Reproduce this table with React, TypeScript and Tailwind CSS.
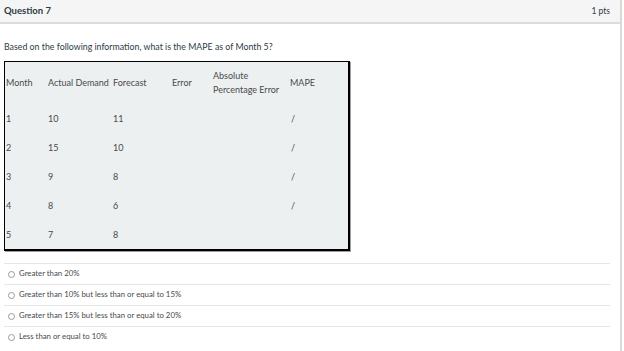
import React from 'react';

const rows = [
  { month: '1', actual: '10', forecast: '11', mape: '/' },
  { month: '2', actual: '15', forecast: '10', mape: '/' },
  { month: '3', actual: '9', forecast: '8', mape: '/' },
  { month: '4', actual: '8', forecast: '6', mape: '/' },
  { month: '5', actual: '7', forecast: '8', mape: '' },
];

const answers = [
  'Greater than 20%',
  'Greater than 10% but less than or equal to 15%',
  'Greater than 15% but less than or equal to 20%',
  'Less than or equal to 10%',
];

const cols = 'grid grid-cols-[42px_65px_59px_41px_77px_1fr] items-center';

export default function App() {
  return (
    <div className="w-[624px] h-[351px] bg-white overflow-hidden font-['Lato','Liberation_Sans',sans-serif] text-[#2d3b45]">
      <div className="w-[622px] h-full border-r-2 border-[#d9d9d9]">
        <div className="h-[24px] bg-[#f5f5f5] border-b-2 border-[#dcdcdc] flex items-center justify-between pl-[4px] pr-[10px]">
          <span className="text-[9.5px] font-bold">Question 7</span>
          <span className="text-[8.5px]">1 pts</span>
        </div>

        <div className="pl-[4px] pr-[10px]">
          <p className="mt-[17px] text-[8.8px] leading-[12px]">
            Based on the following information, what is the MAPE as of Month 5?
          </p>

          <div className="mt-[8px] w-[346px] border-2 border-black border-t-[1.5px] border-l-[1.5px] bg-[#edf0f0] shadow-[1px_1px_0_#a0a0a0] text-[9px] text-[#4a4a4a]">
            <div className={`${cols} h-[42px] pl-[1px]`}>
              <span>Month</span>
              <span>Actual Demand</span>
              <span>Forecast</span>
              <span>Error</span>
              <span className="leading-[14px]">
                Absolute
                <br />
                Percentage Error
              </span>
              <span>MAPE</span>
            </div>
            {rows.map((r) => (
              <div key={r.month} className={`${cols} h-[29px] pl-[1px]`}>
                <span>{r.month}</span>
                <span>{r.actual}</span>
                <span>{r.forecast}</span>
                <span />
                <span />
                <span className="pl-[1px]">{r.mape}</span>
              </div>
            ))}
          </div>

          <div className="mt-[12px]">
            {answers.map((a) => (
              <div key={a} className="h-[21px] border-t border-[#e6e6e6] flex items-center gap-[4px] pl-[4px] text-[7.8px] text-[#4a4a4a]">
                <span className="w-[7px] h-[7px] rounded-full border border-[#9a9a9a] bg-white" />
                <span>{a}</span>
              </div>
            ))}
          </div>
        </div>
      </div>
    </div>
  );
}
